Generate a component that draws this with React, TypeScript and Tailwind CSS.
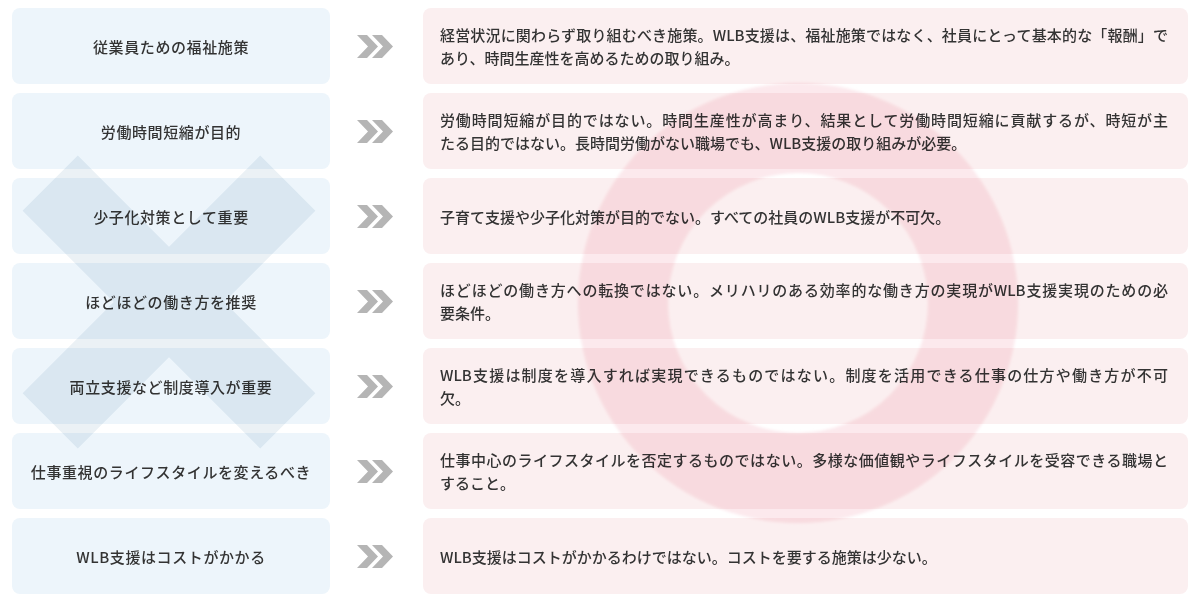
import React from "react";

type Row = { left: string; right: string[] };

const rows: Row[] = [
  {
    left: "従業員ための福祉施策",
    right: [
      "経営状況に関わらず取り組むべき施策。WLB支援は、福祉施策ではなく、社員にとって基本的な「報酬」で",
      "あり、時間生産性を高めるための取り組み。",
    ],
  },
  {
    left: "労働時間短縮が目的",
    right: [
      "労働時間短縮が目的ではない。時間生産性が高まり、結果として労働時間短縮に貢献するが、時短が主",
      "たる目的ではない。長時間労働がない職場でも、WLB支援の取り組みが必要。",
    ],
  },
  {
    left: "少子化対策として重要",
    right: ["子育て支援や少子化対策が目的でない。すべての社員のWLB支援が不可欠。"],
  },
  {
    left: "ほどほどの働き方を推奨",
    right: [
      "ほどほどの働き方への転換ではない。メリハリのある効率的な働き方の実現がWLB支援実現のための必",
      "要条件。",
    ],
  },
  {
    left: "両立支援など制度導入が重要",
    right: [
      "WLB支援は制度を導入すれば実現できるものではない。制度を活用できる仕事の仕方や働き方が不可",
      "欠。",
    ],
  },
  {
    left: "仕事重視のライフスタイルを変えるべき",
    right: [
      "仕事中心のライフスタイルを否定するものではない。多様な価値観やライフスタイルを受容できる職場と",
      "すること。",
    ],
  },
  {
    left: "WLB支援はコストがかかる",
    right: ["WLB支援はコストがかかるわけではない。コストを要する施策は少ない。"],
  },
];

function Chevrons() {
  return (
    <svg width="36" height="23" viewBox="0 0 36 23" aria-hidden="true">
      <polygon points="0,0 10,0 21,11.5 10,23 0,23 11,11.5" fill="#b5b5b5" />
      <polygon points="15,0 25,0 36,11.5 25,23 15,23 26,11.5" fill="#b5b5b5" />
    </svg>
  );
}

function Backdrop() {
  return (
    <svg
      className="absolute inset-0"
      width="1200"
      height="608"
      viewBox="0 0 1200 608"
      aria-hidden="true"
    >
      <defs>
        <filter
          id="soft"
          filterUnits="userSpaceOnUse"
          x="0"
          y="0"
          width="1200"
          height="608"
        >
          <feGaussianBlur stdDeviation="1.5" />
        </filter>
      </defs>
      {/* X mark */}
      <polygon
        points="77.8,155.6 22.6,210.8 260.2,448.4 315.4,393.2"
        fill="#ebf1f5"
      />
      <polygon
        points="22.6,393.2 77.8,448.4 315.4,210.8 260.2,155.6"
        fill="#ebf1f5"
      />
      {/* O mark */}
      <circle
        cx="798"
        cy="303"
        r="175"
        fill="none"
        stroke="#fce9ed"
        strokeWidth="90"
        filter="url(#soft)"
      />
    </svg>
  );
}

export default function App() {
  return (
    <div className="relative w-[1200px] h-[608px] overflow-hidden bg-white font-['Noto_Sans_CJK_JP','Noto_Sans',sans-serif] font-medium text-[#333333]">
      <Backdrop />
      <div className="relative flex flex-col gap-[9px] pt-2 px-3">
        {rows.map((r, i) => (
          <div key={i} className="grid grid-cols-[318px_93px_765px] h-[76px]">
            <div className="flex items-center justify-center rounded-lg bg-[#edf5fb] mix-blend-multiply text-[15px] tracking-[0.6px] leading-[23px]">
              {r.left}
            </div>
            <div className="flex items-center pl-[27px]">
              <Chevrons />
            </div>
            <div className="flex flex-col justify-center rounded-lg bg-[#fbeff0] mix-blend-multiply pl-[17px] pr-[20px] text-[15px] leading-[23px]">
              {r.right.map((line, j) => (
                <span
                  key={j}
                  className={
                    j < r.right.length - 1
                      ? "block whitespace-nowrap text-justify [text-align-last:justify]"
                      : "block whitespace-nowrap"
                  }
                >
                  {line}
                </span>
              ))}
            </div>
          </div>
        ))}
      </div>
    </div>
  );
}
